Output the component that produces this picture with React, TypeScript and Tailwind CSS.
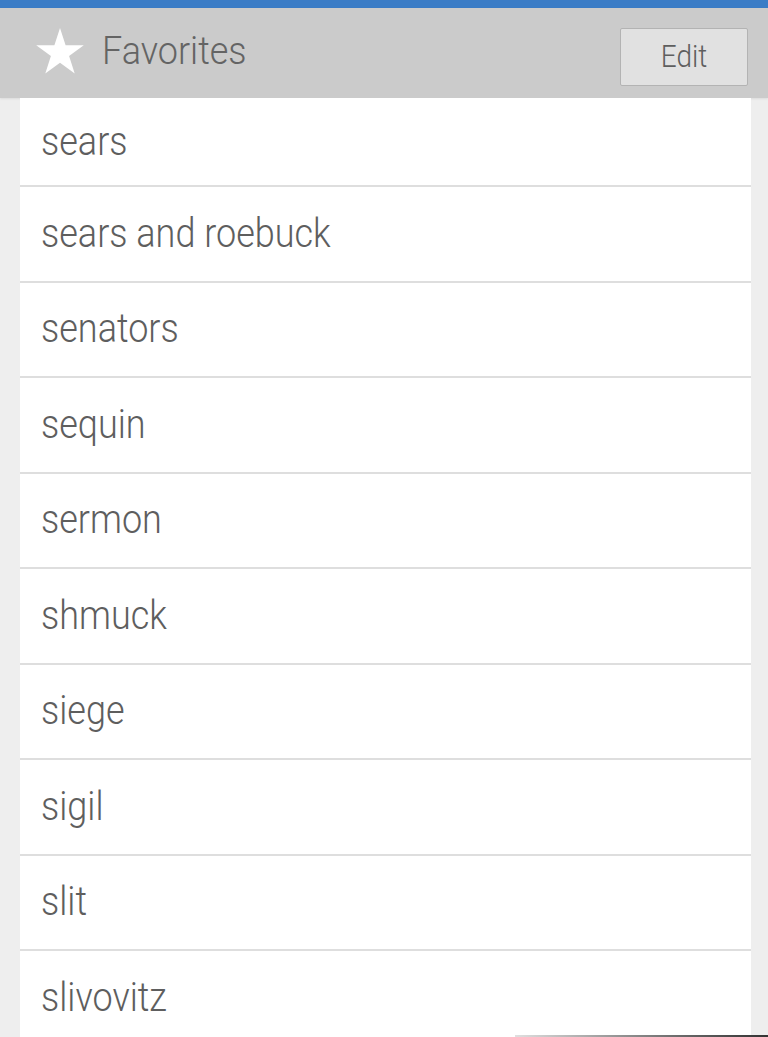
const favorites = [
  'sears',
  'sears and roebuck',
  'senators',
  'sequin',
  'sermon',
  'shmuck',
  'siege',
  'sigil',
  'slit',
  'slivovitz',
];

function StarIcon() {
  return (
    <svg viewBox="0 0 48 46" className="w-[48px] h-[46px]" fill="#ffffff">
      <polygon points="24,0 29.6,17.3 47.8,17.3 33.1,28 38.7,45.5 24,34.7 9.3,45.5 14.9,28 0.2,17.3 18.4,17.3" />
    </svg>
  );
}

export default function App() {
  return (
    <div
      className="h-[1037px] overflow-hidden bg-[#eeeeee] relative"
      style={{ fontFamily: 'Roboto, "Noto Sans", sans-serif' }}
    >
      {/* top accent */}
      <div className="h-[8px] bg-[#3a7cc6]" />

      {/* header */}
      <div className="h-[90px] bg-[#cbcbcb] flex items-center justify-between pl-[36px] pr-[20px] shadow-[0_1px_2px_rgba(0,0,0,0.08)]">
        <div className="flex items-center gap-[18px] -mt-[5px]">
          <StarIcon />
          <span className="text-[36px] font-light text-[#646464] scale-y-[1.1]">Favorites</span>
        </div>
        <button className="w-[128px] h-[58px] mt-[8px] bg-[#e1e1e1] border border-[#b3b3b3] rounded-[2px] text-[28px] font-light text-[#5e5e5e] flex items-center justify-center">
          <span className="scale-y-[1.1]">Edit</span>
        </button>
      </div>

      {/* list */}
      <div className="ml-[20px] w-[731px] bg-white">
        {favorites.map((item, i) => (
          <div
            key={item}
            className={`flex items-center pl-[21px] border-b-2 border-[#dedede] ${i === 0 ? 'h-[89px]' : 'h-[95.5px]'}`}
          >
            <span className="text-[36px] font-light text-[#5e5e5e] leading-none scale-y-[1.12] origin-center">
              {item}
            </span>
          </div>
        ))}
      </div>

      {/* bottom edge shadow */}
      <div className="absolute bottom-0 right-0 w-[253px] h-[2px] bg-gradient-to-r from-[#e0e0e0] to-[#333333]" />
    </div>
  );
}
